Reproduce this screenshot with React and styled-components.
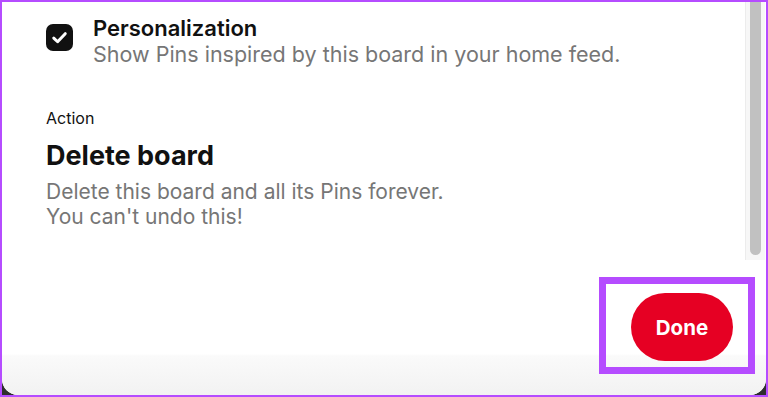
import React from "react";
import styled, { createGlobalStyle } from "styled-components";

const GlobalStyle = createGlobalStyle`
  html, body {
    margin: 0;
    padding: 0;
    background: #ffffff;
  }
  * {
    box-sizing: border-box;
  }
`;

const Frame = styled.div`
  width: 768px;
  height: 397px;
  border: 2px solid #b54cff;
  background: #2e2e2e;
  overflow: hidden;
  font-family: Inter, "Liberation Sans", sans-serif;
`;

const Dialog = styled.div`
  height: 100%;
  display: flex;
  flex-direction: column;
  background: #ffffff;
  border-radius: 0 0 16px 16px;
  overflow: hidden;
`;

const Body = styled.div`
  height: 258px;
  display: flex;
`;

const Content = styled.div`
  flex: 1;
  padding: 13px 0 0 44px;
`;

const OptionRow = styled.div`
  display: flex;
  align-items: flex-start;
  gap: 20px;
`;

const Checkbox = styled.div`
  width: 27px;
  height: 27px;
  margin-top: 9px;
  border-radius: 7px;
  background: #111111;
  display: flex;
  align-items: center;
  justify-content: center;
  flex-shrink: 0;
`;

const OptionTitle = styled.div`
  font-size: 22px;
  line-height: 26px;
  font-weight: 600;
  color: #111111;
`;

const Muted = styled.div`
  font-size: ${(props) => props.size || "21.5px"};
  line-height: ${(props) => props.lh || "26px"};
  color: #767676;
`;

const SectionLabel = styled.div`
  margin-top: 41px;
  font-size: 16px;
  line-height: 20px;
  color: #111111;
`;

const SectionTitle = styled.div`
  margin-top: 12px;
  font-size: 27px;
  line-height: 32px;
  font-weight: 700;
  color: #111111;
`;

const Description = styled.div`
  margin-top: 7px;
`;

const ScrollTrack = styled.div`
  width: 20px;
  margin-right: 1px;
  background: #f7f7f7;
  border-left: 1px solid #ececec;
  display: flex;
  justify-content: center;
`;

const ScrollThumb = styled.div`
  width: 11px;
  height: 253px;
  background: #c1c1c1;
  border-radius: 0 0 6px 6px;
`;

const Footer = styled.div`
  flex: 1;
  display: flex;
  justify-content: flex-end;
  align-items: flex-start;
  padding: 17px 11px 0 0;
  background: linear-gradient(to bottom, #ffffff 0, #ffffff 94px, #fafafa 96px, #f2f2f2 100%);
`;

const Highlight = styled.div`
  border: 7px solid #b54cff;
  padding: 9px 15px 6px 25px;
`;

const DoneButton = styled.button`
  width: 102px;
  height: 68px;
  border: none;
  border-radius: 34px;
  background: #e60023;
  color: #ffffff;
  font-family: Inter, "Liberation Sans", sans-serif;
  font-size: 20.5px;
  font-weight: 700;
  cursor: pointer;
`;

const CheckIcon = () => (
  <svg width="17" height="17" viewBox="0 0 16 16" fill="none">
    <path
      d="M2.6 8.6 L6.2 12 L13.4 4.4"
      stroke="#ffffff"
      strokeWidth="2.8"
      strokeLinecap="round"
      strokeLinejoin="round"
    />
  </svg>
);

export default function App() {
  return (
    <>
      <GlobalStyle />
      <Frame>
        <Dialog>
          <Body>
            <Content>
              <OptionRow>
                <Checkbox>
                  <CheckIcon />
                </Checkbox>
                <div>
                  <OptionTitle>Personalization</OptionTitle>
                  <Muted>Show Pins inspired by this board in your home feed.</Muted>
                </div>
              </OptionRow>
              <SectionLabel>Action</SectionLabel>
              <SectionTitle>Delete board</SectionTitle>
              <Description>
                <Muted size="21px" lh="25px">Delete this board and all its Pins forever.</Muted>
                <Muted size="21px" lh="25px">You can't undo this!</Muted>
              </Description>
            </Content>
            <ScrollTrack>
              <ScrollThumb />
            </ScrollTrack>
          </Body>
          <Footer>
            <Highlight>
              <DoneButton>Done</DoneButton>
            </Highlight>
          </Footer>
        </Dialog>
      </Frame>
    </>
  );
}
